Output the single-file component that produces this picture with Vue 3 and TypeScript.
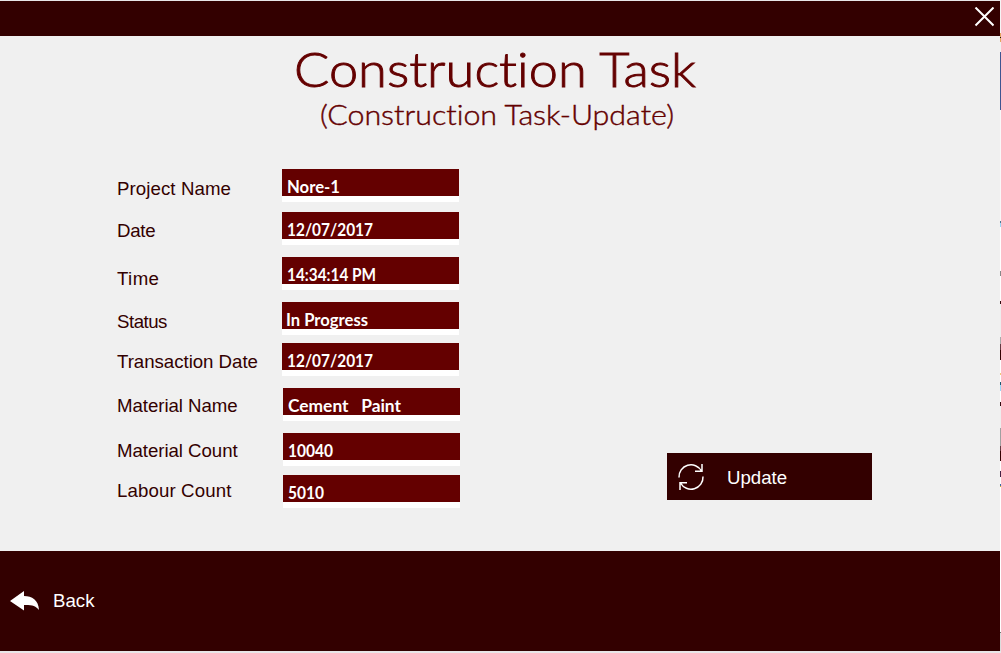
<script setup lang="ts">
interface Field {
  label: string
  value: string
  labelGap: number
  tracking: number
  boxGap: number
  inset: number
  textStart: number
  textWidth: number
}

const fields: Field[] = [
  { label: 'Project Name', value: 'Nore-1', labelGap: 0, tracking: 0.08, boxGap: 0, inset: 0, textStart: 5, textWidth: 53 },
  { label: 'Date', value: '12/07/2017', labelGap: 20, tracking: -0.3, boxGap: 10, inset: 0, textStart: 5, textWidth: 86 },
  { label: 'Time', value: '14:34:14 PM', labelGap: 26, tracking: 0.4, boxGap: 12, inset: 0, textStart: 5, textWidth: 89 },
  { label: 'Status', value: 'In Progress', labelGap: 21, tracking: -0.5, boxGap: 12, inset: 0, textStart: 4, textWidth: 82 },
  { label: 'Transaction Date', value: '12/07/2017', labelGap: 18, tracking: -0.03, boxGap: 8, inset: 0, textStart: 5, textWidth: 86 },
  { label: 'Material Name', value: 'Cement \u00a0 Paint', labelGap: 22, tracking: -0.05, boxGap: 12, inset: 1, textStart: 5, textWidth: 113 },
  { label: 'Material Count', value: '10040', labelGap: 23, tracking: -0.05, boxGap: 12, inset: 1, textStart: 5, textWidth: 45 },
  { label: 'Labour Count', value: '5010', labelGap: 18, tracking: 0.12, boxGap: 9, inset: 1, textStart: 5, textWidth: 36 },
]
</script>

<template>
  <div class="screen">
    <div class="window">
      <header class="titlebar">
        <button class="close" aria-label="Close">
          <svg width="20" height="20" viewBox="0 0 20 20"><path d="M1.5 .5L19.5 18.5M19.5 .5L1.5 18.5" /></svg>
        </button>
      </header>
      <main class="content">
        <svg class="heading" width="1000" height="104" role="heading">
          <text class="title" x="294" y="51" textLength="402" lengthAdjust="spacingAndGlyphs">Construction Task</text>
          <text class="subtitle" x="320" y="89" textLength="354" lengthAdjust="spacingAndGlyphs">(Construction Task-Update)</text>
        </svg>
        <div class="form">
          <div class="labels">
            <label
              v-for="f in fields"
              :key="f.label"
              :style="{ marginTop: f.labelGap + 'px', letterSpacing: f.tracking + 'px' }"
            >{{ f.label }}</label>
          </div>
          <div class="values">
            <div
              v-for="f in fields"
              :key="f.label"
              class="box"
              :style="{ marginTop: f.boxGap + 'px', marginLeft: f.inset + 'px' }"
            >
              <svg width="177" height="33">
                <text :x="f.textStart" y="24" :textLength="f.textWidth" lengthAdjust="spacingAndGlyphs">{{ f.value }}</text>
              </svg>
            </div>
          </div>
          <button class="update">
            <svg width="28" height="28" viewBox="0 0 28 28">
              <path d="M2 14.5A12 12 0 0 1 24.5 8M25 1V8.2H18M26 13.5A12 12 0 0 1 3.5 20M3 27V19.8H10" />
            </svg>
            <span>Update</span>
          </button>
        </div>
      </main>
      <footer class="footer">
        <button class="back">
          <svg width="29" height="20" viewBox="0 0 29 20">
            <path d="M0 10L14 0V5C22 5 28.5 9 29 19C26 15 22 13.8 14 14V19.5Z" />
          </svg>
          <span>Back</span>
        </button>
      </footer>
    </div>
    <div class="edge"></div>
  </div>
</template>

<style>
body {
  margin: 0;
  background: #fff;
}
</style>

<style scoped>
.screen {
  display: flex;
  width: 1001px;
  height: 653px;
  overflow: hidden;
  background: #e9e6e8;
  font-family: "Liberation Sans", Arial, sans-serif;
  font-size: 18.67px;
}
.window {
  display: flex;
  flex-direction: column;
  width: 1000px;
  height: 650px;
  margin-top: 1px;
  background: #f0f0f0;
}
button {
  border: 0;
  padding: 0;
  background: none;
  color: #fff;
  font: inherit;
}
.titlebar {
  display: flex;
  justify-content: flex-end;
  height: 35px;
  background: #330000;
}
.close {
  width: 20px;
  height: 20px;
  margin: 6px 6px 0 0;
}
.close svg {
  display: block;
  fill: none;
  stroke: #fff;
  stroke-width: 2;
}
.content {
  height: 515px;
}
.heading {
  display: block;
}
.title,
.subtitle {
  font-family: "Century Gothic", "URW Gothic", Lato, sans-serif;
  font-weight: 300;
  font-variant-ligatures: none;
  fill: #640000;
  stroke: #640000;
}
.title {
  font-size: 48px;
  stroke-width: 0.9px;
}
.subtitle {
  font-size: 26.67px;
  stroke-width: 0.4px;
}
.form {
  display: flex;
}
.labels {
  display: flex;
  flex-direction: column;
  width: 165px;
  margin: 38px 0 0 117px;
  color: #330000;
}
.labels label {
  height: 22px;
  line-height: 22px;
  white-space: nowrap;
}
.values {
  width: 178px;
  margin-top: 29px;
}
.box {
  width: 177px;
  height: 27px;
  border-bottom: 6px solid #fff;
  background: #640000;
}
.box svg {
  display: block;
}
.box text {
  font-family: "Century Gothic", "URW Gothic", Lato, sans-serif;
  font-size: 16.5px;
  font-weight: 700;
  fill: #fff;
}
.update {
  display: flex;
  align-items: center;
  width: 205px;
  height: 47px;
  margin: 313px 0 0 207px;
  background: #330000;
}
.update svg {
  margin-left: 10px;
  fill: none;
  stroke: #fff;
  stroke-width: 1.5;
}
.update span {
  margin: 2px 0 0 22px;
}
.footer {
  display: flex;
  align-items: center;
  height: 100px;
  background: #330000;
}
.back {
  display: flex;
  align-items: center;
  margin-left: 10px;
}
.back svg {
  fill: #fff;
}
.back span {
  margin-left: 14px;
}
.edge {
  width: 1px;
  height: 651px;
  background: linear-gradient(
    #f5f5f5 0 33px, #e3a65e 33px 37px, #221100 37px 38px, #e3a65e 38px 42px,
    #f0f0f0 42px 52px, #3f5591 52px 110px, #f8f8f8 110px 221px, #4a7890 221px 223px,
    #9cd5f5 223px 227px, #fff 227px 271px, #888 271px 276px, #fff 276px 301px,
    #330a10 301px 304px, #eee 304px 337px, #aaa 337px 344px, #643a42 344px 350px,
    #330000 350px 360px, #fff 360px 373px, #f0c878 373px 375px, #fff 375px 382px,
    #1d5870 382px 385px, #9cd5f5 385px 391px, #fff 391px 402px, #330a10 402px 406px,
    #eee 406px 428px, #a0a0a0 428px 446px, #643a42 446px 451px, #330000 451px 461px,
    #fff 461px 471px, #442244 471px 477px, #fff 477px 484px, #3568a8 484px 486px,
    #d4b020 486px 487px, #fff 487px 632px, #777 632px 633px, #ddd 633px 651px
  );
}
</style>
